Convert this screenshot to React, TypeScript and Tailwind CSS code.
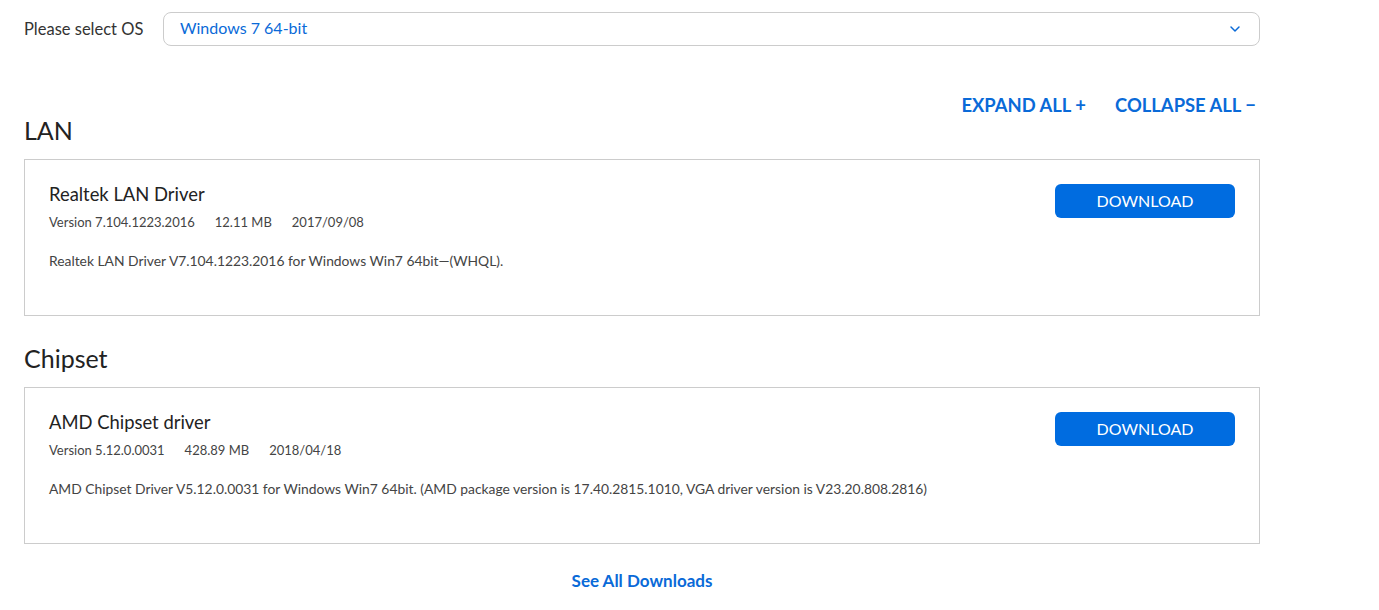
import { ChevronDown } from 'lucide-react'

const drivers = [
  {
    section: 'LAN',
    title: 'Realtek LAN Driver',
    version: 'Version 7.104.1223.2016',
    size: '12.11 MB',
    date: '2017/09/08',
    desc: 'Realtek LAN Driver V7.104.1223.2016 for Windows Win7 64bit—(WHQL).',
  },
  {
    section: 'Chipset',
    title: 'AMD Chipset driver',
    version: 'Version 5.12.0.0031',
    size: '428.89 MB',
    date: '2018/04/18',
    desc: 'AMD Chipset Driver V5.12.0.0031 for Windows Win7 64bit. (AMD package version is 17.40.2815.1010, VGA driver version is V23.20.808.2816)',
  },
]

export default function App() {
  return (
    <div className="min-h-screen bg-white text-[#222] font-['Lato','Noto_Sans',sans-serif]">
      <div className="w-[1236px] ml-6 pt-3">
        <div className="flex items-center">
          <span className="w-[139px] text-[16.5px] text-[#333]">Please select OS</span>
          <div className="flex-1 h-[34px] flex items-center justify-between rounded-lg border border-[#ccc] pl-4 pr-4">
            <span className="text-[16px] leading-[20px] -mt-0.5 text-[#0a6ad8]">Windows 7 64-bit</span>
            <ChevronDown className="w-4 h-4 text-[#0a6ad8]" strokeWidth={2.2} />
          </div>
        </div>

        <div className="flex justify-end gap-[29px] mt-[49px] pr-1 text-[18.4px] leading-[20px] font-bold text-[#0a6ad8]">
          <span>EXPAND ALL +</span>
          <span>COLLAPSE ALL −</span>
        </div>

        {drivers.map((d, i) => (
          <div key={d.title}>
            <h2 className={`${i === 0 ? 'mt-0' : 'mt-[27px]'} text-[25px] leading-[30px] text-[#222]`}>
              {d.section}
            </h2>
            <div className="mt-[14px] h-[157px] border border-[#ccc] flex justify-between pl-6 pr-6 pt-[23px]">
              <div>
                <div className="text-[18.4px] leading-[22px] text-[#222]">{d.title}</div>
                <div className="mt-[8px] flex gap-5 text-[13px] leading-[18px] text-[#444]">
                  <span>{d.version}</span>
                  <span>{d.size}</span>
                  <span>{d.date}</span>
                </div>
                <div className="mt-[20px] text-[13.85px] leading-[20px] text-[#444]">{d.desc}</div>
              </div>
              <button className="mt-px w-[180px] h-[34px] rounded-[6px] bg-[#006ce0] text-white text-[16px]">
                DOWNLOAD
              </button>
            </div>
          </div>
        ))}

        <div className="mt-[27px] text-center text-[17px] leading-[20px] font-bold text-[#0a6ad8]">See All Downloads</div>
      </div>
    </div>
  )
}
